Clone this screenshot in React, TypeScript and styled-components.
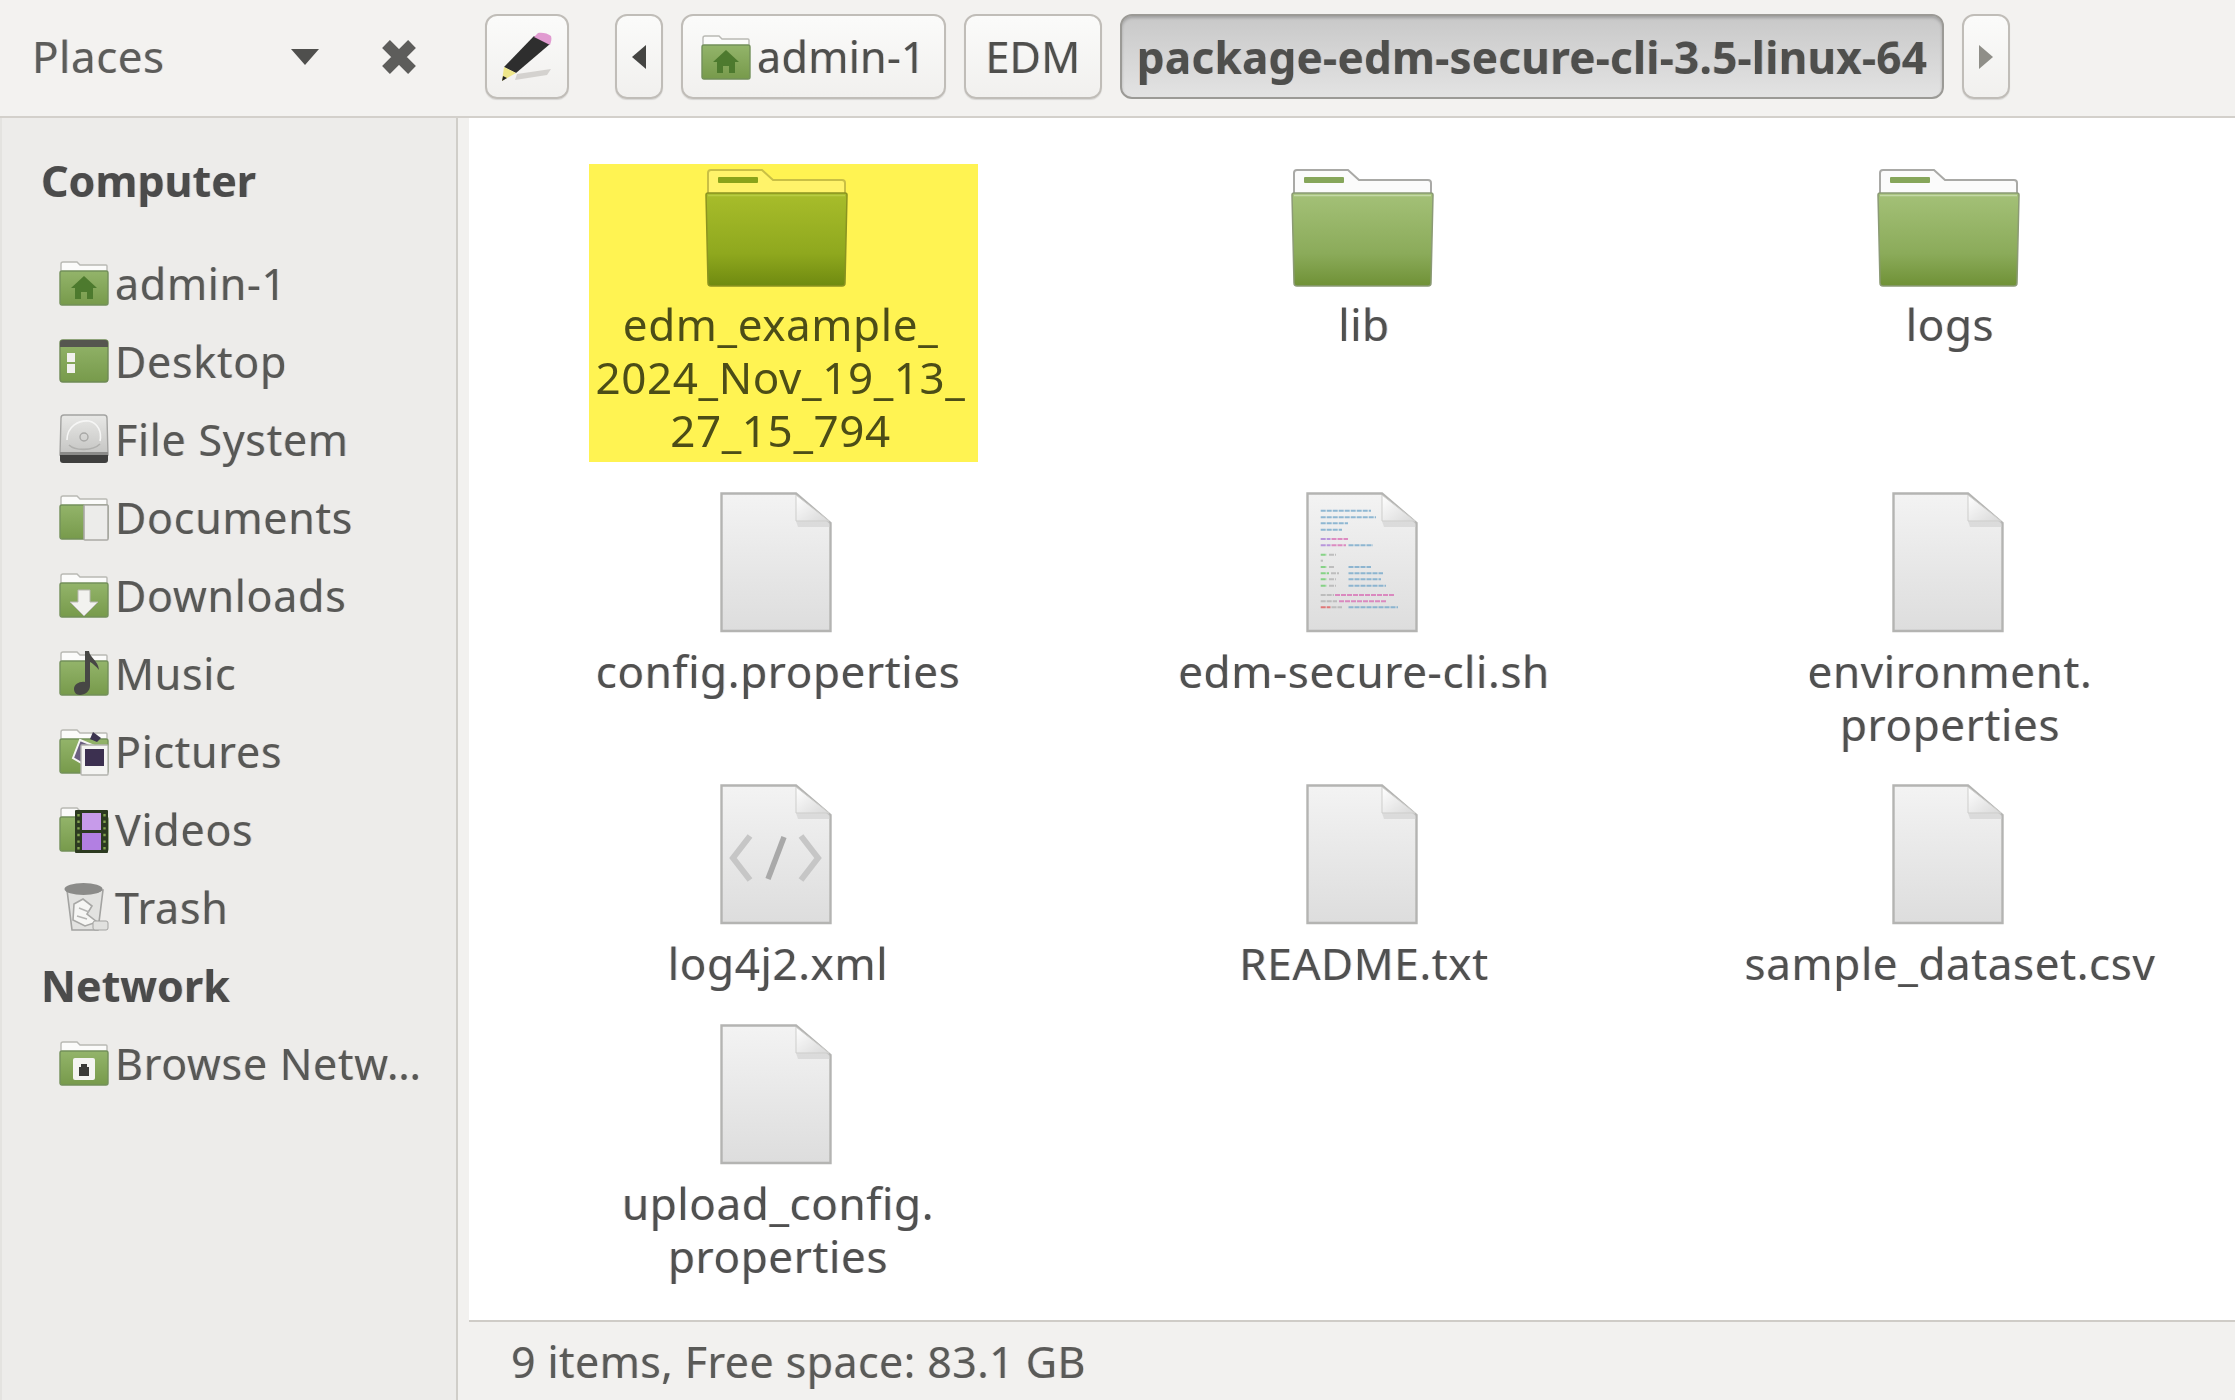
import * as React from 'react';
import styled, { createGlobalStyle } from 'styled-components';

const fontStack = `"Noto Sans", "Open Sans", sans-serif`;
const fringe = `-0.8px 0 rgba(214, 130, 50, 0.28), 0.8px 0 rgba(50, 130, 220, 0.28)`;

const GlobalStyle = createGlobalStyle`
  html, body {
    margin: 0;
    padding: 0;
    background: #f2f1ef;
    overflow: hidden;
  }
`;

const Page = styled.div`
  width: 2235px;
  height: 1400px;
  display: flex;
  flex-direction: column;
  overflow: hidden;
  background: #f2f1ef;
  font-family: ${fontStack};
  font-size: 43px;
  color: #4a4a48;
  filter: blur(0.7px);
`;

const Toolbar = styled.header`
  flex: 0 0 118px;
  box-sizing: border-box;
  display: flex;
  align-items: center;
  gap: 18px;
  padding-bottom: 3px;
  background: #f3f2f0;
  border-bottom: 2px solid #d3d0cb;
`;

const PlacesBar = styled.div`
  flex: 0 0 467px;
  box-sizing: border-box;
  display: flex;
  align-items: center;
  padding-left: 32px;
`;

const PlacesLabel = styled.span`
  flex: 0 0 259px;
  margin-top: -2px;
  font-size: 44px;
  letter-spacing: 0.5px;
  color: #5c5c5a;
  text-shadow: ${fringe};
`;

const PathButton = styled.div<{ $w: number; $active?: boolean; $gapAfter?: number }>`
  flex: 0 0 ${(p) => p.$w}px;
  height: 85px;
  box-sizing: border-box;
  display: flex;
  align-items: center;
  justify-content: center;
  gap: 6px;
  margin-right: ${(p) => p.$gapAfter ?? 0}px;
  border-radius: 12px;
  white-space: nowrap;
  border: 2px solid ${(p) => (p.$active ? '#9b9a96' : '#c0bdb8')};
  background: ${(p) =>
    p.$active ? 'linear-gradient(#c8c8c8, #e3e3e3)' : 'linear-gradient(#fbfbfa, #f1f0ee)'};
  box-shadow: ${(p) =>
    p.$active ? 'inset 0 2px 3px rgba(0,0,0,.2)' : '0 1px 1px rgba(0,0,0,.12)'};
  color: #4f4f4d;
  font-weight: ${(p) => (p.$active ? 700 : 400)};
  font-size: ${(p) => (p.$active ? 44 : 43)}px;
  letter-spacing: ${(p) => (p.$active ? 0.25 : 0.3)}px;
  text-shadow: ${fringe};
`;

const Body = styled.div`
  flex: 1;
  min-height: 0;
  display: flex;
`;

const Sidebar = styled.nav`
  flex: 0 0 458px;
  box-sizing: border-box;
  padding: 23px 0 0 0;
  background: #edecea;
  border-right: 2px solid #d0cec9;
  border-left: 2px solid #e4e3e0;
`;

const SideHeading = styled.div<{ $gapAfter?: number }>`
  height: 78px;
  margin-bottom: ${(p) => p.$gapAfter ?? 0}px;
  display: flex;
  align-items: center;
  padding-left: 39px;
  font-weight: 700;
  font-size: 43px;
  color: #4b4b4b;
  text-shadow: ${fringe};
`;

const SideRow = styled.div`
  height: 78px;
  display: flex;
  align-items: center;
  padding-left: 57px;
  gap: 6px;
  white-space: nowrap;
  letter-spacing: 0.7px;
  color: #585856;
  text-shadow: ${fringe};
`;

const MainColumn = styled.main`
  flex: 1;
  min-width: 0;
  display: flex;
  flex-direction: column;
  margin-left: 11px;
`;

const FileView = styled.section`
  flex: 1;
  min-height: 0;
  box-sizing: border-box;
  display: grid;
  grid-template-columns: repeat(3, 586px);
  grid-template-rows: 296px 260px 208px auto;
  row-gap: 32px;
  padding: 46px 0 0 14px;
  background: #ffffff;
  border-bottom: 2px solid #cfccc7;
`;

const FileItem = styled.div<{ $selected?: boolean }>`
  justify-self: center;
  align-self: start;
  box-sizing: border-box;
  display: flex;
  flex-direction: column;
  align-items: center;
  width: ${(p) => (p.$selected ? '389px' : 'auto')};
  margin-left: ${(p) => (p.$selected ? 14 : 0)}px;
  padding-bottom: ${(p) => (p.$selected ? 6 : 0)}px;
  background: ${(p) => (p.$selected ? '#fff352' : 'transparent')};
`;

const FolderSlot = styled.div<{ $selected?: boolean }>`
  display: flex;
  padding-top: 4px;
  margin-right: ${(p) => (p.$selected ? 14 : 0)}px;
`;

const PageSlot = styled.div`
  display: flex;
`;

const FileLabel = styled.div<{ $selected?: boolean; $gap: number }>`
  margin-top: ${(p) => p.$gap}px;
  margin-right: ${(p) => (p.$selected ? 5 : 0)}px;
  padding-left: ${(p) => (p.$selected ? 0 : 4)}px;
  text-align: center;
  white-space: pre-line;
  font-size: 44px;
  line-height: 52.8px;
  letter-spacing: 0.6px;
  color: ${(p) => (p.$selected ? '#4c4d17' : '#505050')};
  text-shadow: ${(p) => (p.$selected ? 'none' : fringe)};
`;

const StatusBar = styled.footer`
  flex: 0 0 78px;
  display: flex;
  align-items: center;
  padding-left: 42px;
  color: #5a5a58;
  letter-spacing: 0.4px;
  text-shadow: ${fringe};
`;

const DropTriangle = () => (
  <svg width="28" height="16" viewBox="0 0 28 16">
    <path d="M0 0H28L14 16Z" fill="#4f4f4d" />
  </svg>
);

const CloseCross = () => (
  <svg width="40" height="40" viewBox="0 0 40 40" style={{ marginLeft: 60 }}>
    <path d="M7 7L33 33M33 7L7 33" stroke="#5d5d5b" strokeWidth="11" strokeLinecap="butt" />
  </svg>
);

const Pencil = () => (
  <svg width="52" height="50" viewBox="0 0 52 50">
    <path d="M16 42L50 37L46 43L14 48Z" fill="#c9c7c3" opacity=".75" />
    <path d="M33 4L49 12L15 41L3 35Z" fill="#2e2e2e" />
    <path d="M33 5L37 1C40 0 47 1 50 4C51 7 50 10 49 13Z" fill="#e19bd1" />
    <path d="M3 35L15 41L1 49Z" fill="#efe78a" />
    <path d="M1 49L2 44L6 46Z" fill="#222" />
  </svg>
);

const ArrowLeft = () => (
  <svg width="14" height="24" viewBox="0 0 14 24">
    <path d="M14 0V24L0 12Z" fill="#444442" />
  </svg>
);

const ArrowRight = () => (
  <svg width="14" height="24" viewBox="0 0 14 24">
    <path d="M0 0V24L14 12Z" fill="#8f8e88" />
  </svg>
);

type SmallKind =
  | 'home'
  | 'desktop'
  | 'disk'
  | 'documents'
  | 'downloads'
  | 'music'
  | 'pictures'
  | 'videos'
  | 'trash'
  | 'network';

const SmallFolderBase = () => (
  <>
    <path d="M2 15V6Q2 4 4 4H18L21 7H47Q48 7 48 8V15Z" fill="#fbfbfa" stroke="#b9b9b4" strokeWidth="1.4" />
    <rect x="1" y="13" width="48" height="34" rx="2" fill="url(#smallGreen)" stroke="#73905a" strokeWidth="1.4" />
  </>
);

const SmallIcon = ({ kind }: { kind: SmallKind }) => (
  <svg width="50" height="50" viewBox="0 0 50 50" style={{ flex: '0 0 50px' }}>
    <defs>
      <linearGradient id="smallGreen" x1="0" y1="0" x2="0" y2="1">
        <stop offset="0" stopColor="#93b46a" />
        <stop offset="1" stopColor="#779a4b" />
      </linearGradient>
      <linearGradient id="diskBody" x1="0" y1="0" x2="0" y2="1">
        <stop offset="0" stopColor="#e8e8e6" />
        <stop offset="1" stopColor="#c4c4c2" />
      </linearGradient>
    </defs>
    {kind === 'home' && (
      <>
        <SmallFolderBase />
        <path d="M25 18L38 30H34V41H28V34H22V41H16V30H12Z" fill="#4d7a2e" />
      </>
    )}
    {kind === 'desktop' && (
      <>
        <rect x="1" y="4" width="48" height="42" rx="3" fill="url(#smallGreen)" stroke="#6f8a55" strokeWidth="1.4" />
        <path d="M1 7Q1 4 4 4H46Q49 4 49 7V11H1Z" fill="#55564f" />
        <rect x="8" y="17" width="8" height="9" fill="#f1f1ee" />
        <rect x="8" y="28" width="8" height="9" fill="#f1f1ee" />
      </>
    )}
    {kind === 'disk' && (
      <>
        <path d="M5 1H45Q48 1 48 4L49 41H1L2 4Q2 1 5 1Z" fill="url(#diskBody)" stroke="#a3a3a1" strokeWidth="1.4" />
        <path d="M8 26C8 12 20 6 30 7C39 9 43 18 41 27" fill="none" stroke="#f6f6f5" strokeWidth="1.6" />
        <path d="M10 31C16 37 34 37 41 30" fill="none" stroke="#b0b0ae" strokeWidth="1.6" />
        <circle cx="25" cy="23" r="4" fill="none" stroke="#a8a8a6" strokeWidth="1.4" />
        <path d="M1 40H49V46Q49 49 46 49H4Q1 49 1 46Z" fill="#3f3f3e" />
        <rect x="1" y="38" width="48" height="3" fill="#8b8b89" />
      </>
    )}
    {kind === 'documents' && (
      <>
        <SmallFolderBase />
        <rect x="25" y="13" width="24" height="35" rx="1" fill="#ececea" stroke="#aaa9a5" strokeWidth="1.6" />
      </>
    )}
    {kind === 'downloads' && (
      <>
        <SmallFolderBase />
        <path d="M19 20H31V32H39L25 46L11 32H19Z" fill="#f2f2ef" stroke="#b8b8b2" strokeWidth="1" />
      </>
    )}
    {kind === 'music' && (
      <>
        <SmallFolderBase />
        <path d="M26 3H30C31 10 39 12 40 22C37 18 33 15 31 14V38C31 43 26 47 21 47C17 47 15 44 15 41C15 36 21 33 26 34Z" fill="#474745" />
      </>
    )}
    {kind === 'pictures' && (
      <>
        <SmallFolderBase />
        <path d="M21 14L38 21L31 42L14 32Z" fill="#6b5f80" stroke="#f5f5f3" strokeWidth="2" />
        <path d="M34 6L42 12L38 16L31 13Z" fill="#3c3450" />
        <rect x="22" y="19" width="27" height="30" rx="1" fill="#f4f4f2" stroke="#b3b3af" strokeWidth="1.4" />
        <rect x="26" y="23" width="19" height="17" fill="#3c3050" />
      </>
    )}
    {kind === 'videos' && (
      <>
        <SmallFolderBase />
        <rect x="16" y="6" width="33" height="43" rx="1" fill="#2c3a20" />
        <rect x="23" y="9" width="19" height="17" fill="#c79bea" />
        <rect x="23" y="29" width="19" height="17" fill="#b27fe2" />
        <path d="M19.5 10V46M45.5 10V46" stroke="#82a24f" strokeWidth="2.4" strokeDasharray="2.4 4.2" />
      </>
    )}
    {kind === 'trash' && (
      <>
        <path d="M8 8H44L39 48H13Z" fill="#e2e2e0" stroke="#a3a3a1" strokeWidth="1.6" />
        <ellipse cx="24.5" cy="7" rx="19" ry="6" fill="#8b8b89" />
        <path d="M15 22L24 17L33 24L28 32L38 40L26 44L14 38Z" fill="#f6f6f4" stroke="#a8a8a6" strokeWidth="1.6" />
        <path d="M20 26L30 30M18 34L28 37" stroke="#b5b5b3" strokeWidth="1.4" />
        <rect x="34" y="39" width="15" height="9" rx="2" fill="#e1e1df" stroke="#a3a3a1" />
      </>
    )}
    {kind === 'network' && (
      <>
        <SmallFolderBase />
        <rect x="14" y="20" width="22" height="22" rx="2" fill="#f4f4f2" />
        <path d="M20 38V29H22V26H28V29H30V38Z" fill="#3a3a38" />
      </>
    )}
  </svg>
);

const LargeFolder = ({ selected, id }: { selected?: boolean; id: string }) => (
  <svg width="143" height="119" viewBox="0 0 143 119">
    <defs>
      <linearGradient id={id} x1="0" y1="0" x2="0" y2="1">
        <stop offset="0" stopColor={selected ? '#a8bd2b' : '#a4c178'} />
        <stop offset="0.65" stopColor={selected ? '#8fa81e' : '#8bab5a'} />
        <stop offset="1" stopColor={selected ? '#6f8a10' : '#6f9136'} />
      </linearGradient>
    </defs>
    <path
      d="M3 28V5Q3 2 6 2H57L68 12H137Q140 12 140 15V28Z"
      fill={selected ? '#fff36a' : '#fbfbfb'}
      stroke={selected ? '#c9bf45' : '#a9a9a6'}
      strokeWidth="2"
    />
    <rect x="13" y="9" width="40" height="6" rx="1" fill={selected ? '#8aa31a' : '#86a65a'} />
    <path
      d="M1 27Q1 25 3 25H140Q142 25 142 27L140 115Q140 118 137 118H6Q3 118 3 115Z"
      fill={`url(#${id})`}
      stroke={selected ? '#8a9320' : '#8b9a75'}
      strokeWidth="1.5"
    />
    <path d="M3 27.5H140" stroke={selected ? '#b9cc44' : '#c4d8a6'} strokeWidth="1.5" />
  </svg>
);

type Seg = [number, number, string];

const B = '#6fa5c9';
const P = '#a87ad6';
const K = '#d86cb4';
const G = '#66cc66';
const Y = '#b0b0b0';
const R = '#e05555';

// x ranges read from the script icon, one row per code line
const scriptLines: [number, Seg[]][] = [
  [18.7, [[14.7, 65, B]]],
  [25.3, [[14.7, 70, B]]],
  [31.3, [[14.7, 42, B]]],
  [37.7, [[14.7, 36, B]]],
  [47, [[14.7, 24.5, P], [25.5, 42, K]]],
  [53.3, [[14.7, 24.5, P], [25.5, 40, K], [42.5, 67, B]]],
  [62.7, [[14.7, 21, G], [23, 30, Y]]],
  [68.7, [[14.7, 17, Y]]],
  [75, [[14.7, 21, G], [23, 28, Y], [42.5, 65, B]]],
  [81.3, [[14.7, 23, G], [25, 33, Y], [42.5, 77, B]]],
  [87.3, [[14.7, 21, G], [23, 30, Y], [42.5, 75, B]]],
  [93.7, [[14.7, 21, G], [23, 30, Y], [42.5, 80, B]]],
  [103, [[14.7, 28, Y], [29, 89, K]]],
  [109.3, [[14.7, 31, Y], [33, 80, K]]],
  [115.3, [[14.7, 24.5, R], [25.5, 36, Y], [42.5, 92, B]]],
];

type PageKind = 'blank' | 'script' | 'xml';

const PageIcon = ({ kind, id }: { kind: PageKind; id: string }) => (
  <svg width="112" height="141" viewBox="0 0 112 141">
    <defs>
      <linearGradient id={id} x1="0" y1="0" x2="0" y2="1">
        <stop offset="0" stopColor="#f3f3f3" />
        <stop offset="1" stopColor="#dddddd" />
      </linearGradient>
      <linearGradient id={`${id}-fold`} x1="0" y1="0" x2="1" y2="1">
        <stop offset="0" stopColor="#ffffff" />
        <stop offset="1" stopColor="#d8d8d8" />
      </linearGradient>
    </defs>
    <path d="M1.5 1.5H76L110.5 31V139H1.5Z" fill={`url(#${id})`} stroke="#b4b4b2" strokeWidth="2.4" />
    <path d="M76 3V29H109Z" fill={`url(#${id}-fold)`} stroke="#cdcdcb" strokeWidth="1" />
    <path d="M76 29H109L110 35H78Z" fill="#cfcfcf" opacity=".6" />
    {kind === 'script' &&
      scriptLines.map(([y, segs]) =>
        segs.map(([x1, x2, color]) => (
          <line key={`${y}-${x1}`} x1={x1} x2={x2} y1={y} y2={y} stroke={color} strokeWidth="2" strokeDasharray="5 1" opacity=".75" />
        ))
      )}
    {kind === 'xml' && (
      <>
        <path d="M30 52L13 74L30 96M81 52L98 74L81 96" fill="none" stroke="#c6c6c6" strokeWidth="6" />
        <path d="M64 53L48 95" fill="none" stroke="#a9a9a9" strokeWidth="5.5" />
      </>
    )}
  </svg>
);

const sideComputer: { label: string; kind: SmallKind }[] = [
  { label: 'admin-1', kind: 'home' },
  { label: 'Desktop', kind: 'desktop' },
  { label: 'File System', kind: 'disk' },
  { label: 'Documents', kind: 'documents' },
  { label: 'Downloads', kind: 'downloads' },
  { label: 'Music', kind: 'music' },
  { label: 'Pictures', kind: 'pictures' },
  { label: 'Videos', kind: 'videos' },
  { label: 'Trash', kind: 'trash' },
];

const files: { name: string; icon: 'folder' | PageKind; selected?: boolean }[] = [
  { name: 'edm_example_\n2024_Nov_19_13_\n27_15_794', icon: 'folder', selected: true },
  { name: 'lib', icon: 'folder' },
  { name: 'logs', icon: 'folder' },
  { name: 'config.properties', icon: 'blank' },
  { name: 'edm-secure-cli.sh', icon: 'script' },
  { name: 'environment.\nproperties', icon: 'blank' },
  { name: 'log4j2.xml', icon: 'xml' },
  { name: 'README.txt', icon: 'blank' },
  { name: 'sample_dataset.csv', icon: 'blank' },
  { name: 'upload_config.\nproperties', icon: 'blank' },
];

const App = () => {
  return (
    <Page>
      <GlobalStyle />
      <Toolbar>
        <PlacesBar>
          <PlacesLabel>Places</PlacesLabel>
          <DropTriangle />
          <CloseCross />
        </PlacesBar>
        <PathButton $w={84} $gapAfter={28}>
          <Pencil />
        </PathButton>
        <PathButton $w={48}>
          <ArrowLeft />
        </PathButton>
        <PathButton $w={265}>
          <SmallIcon kind="home" />
          admin-1
        </PathButton>
        <PathButton $w={138}>EDM</PathButton>
        <PathButton $w={824} $active>
          package-edm-secure-cli-3.5-linux-64
        </PathButton>
        <PathButton $w={48}>
          <ArrowRight />
        </PathButton>
      </Toolbar>
      <Body>
        <Sidebar>
          <SideHeading $gapAfter={25}>Computer</SideHeading>
          {sideComputer.map((row) => (
            <SideRow key={row.label}>
              <SmallIcon kind={row.kind} />
              {row.label}
            </SideRow>
          ))}
          <SideHeading>Network</SideHeading>
          <SideRow>
            <SmallIcon kind="network" />
            Browse Netw…
          </SideRow>
        </Sidebar>
        <MainColumn>
          <FileView>
            {files.map((file, i) => (
              <FileItem key={file.name} $selected={file.selected}>
                {file.icon === 'folder' ? (
                  <FolderSlot $selected={file.selected}>
                    <LargeFolder selected={file.selected} id={`folder-${i}`} />
                  </FolderSlot>
                ) : (
                  <PageSlot>
                    <PageIcon kind={file.icon} id={`page-${i}`} />
                  </PageSlot>
                )}
                <FileLabel $selected={file.selected} $gap={file.icon === 'folder' ? 11 : 12}>
                  {file.name}
                </FileLabel>
              </FileItem>
            ))}
          </FileView>
          <StatusBar>9 items, Free space: 83.1 GB</StatusBar>
        </MainColumn>
      </Body>
    </Page>
  );
};

export default App;
